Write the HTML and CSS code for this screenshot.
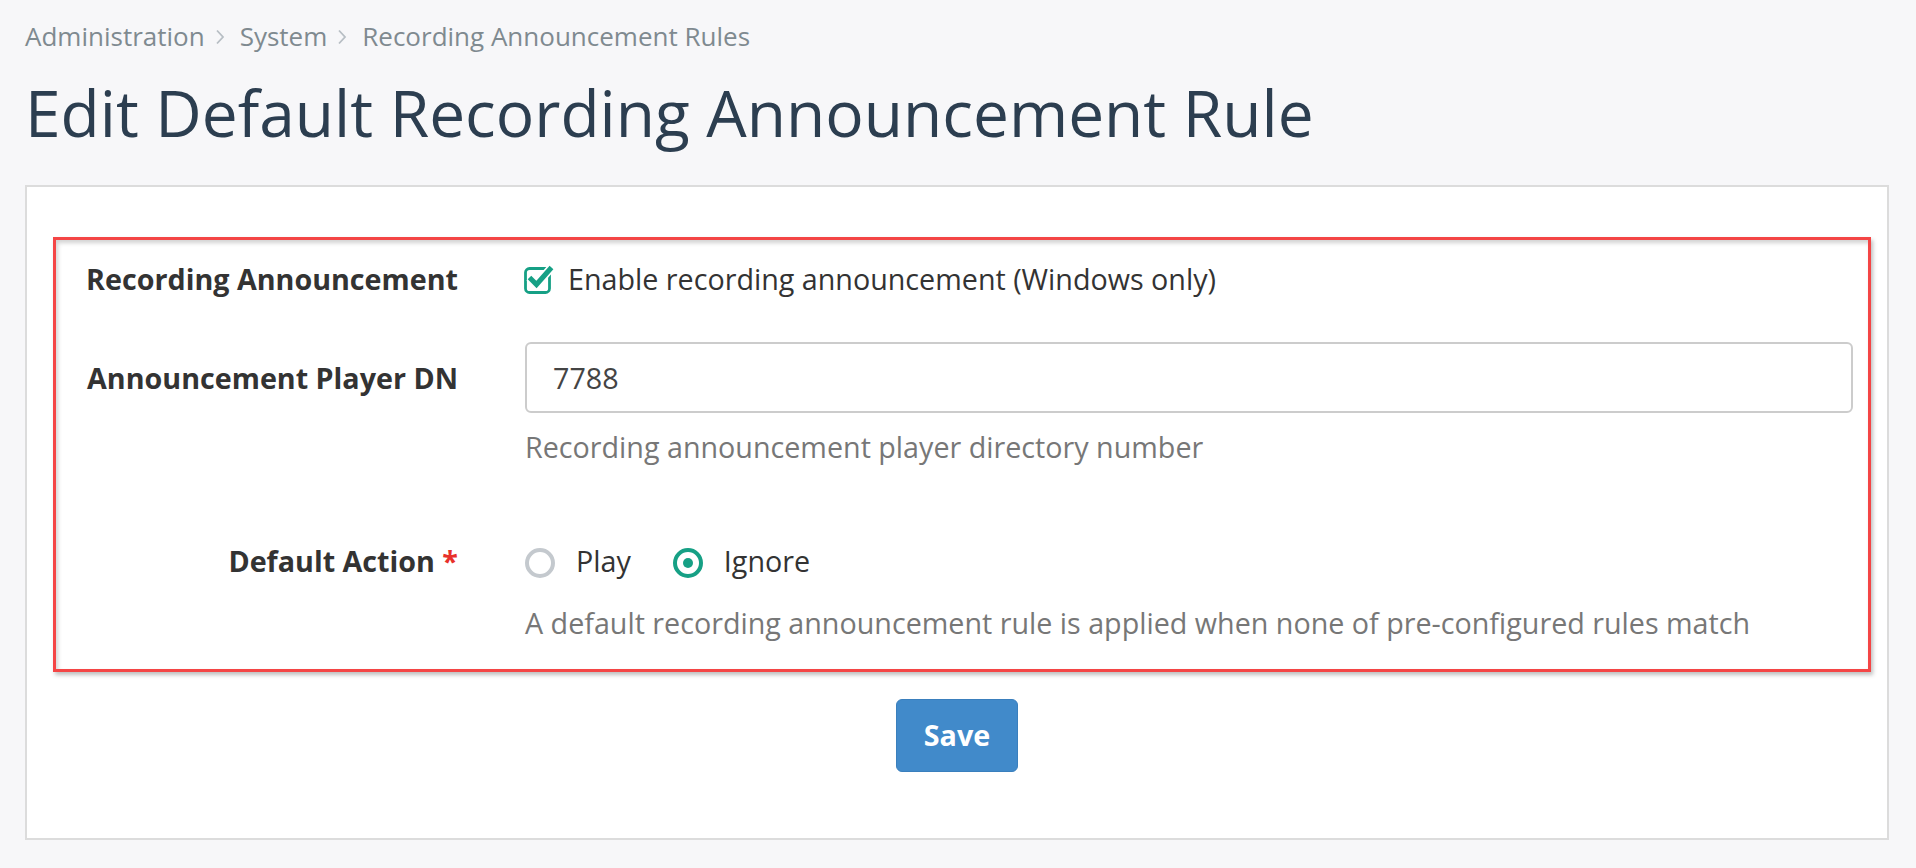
FILE: index.html
```html
<!DOCTYPE html>
<html lang="en">
<head>
    <meta charset="UTF-8">
    <meta name="viewport" content="width=device-width, initial-scale=1">
    <title>Edit Default Recording Announcement Rule</title>
    <link rel="stylesheet" href="styles.css">
</head>
<body>
    <div class="page">
        <div class="breadcrumb">
            <span>Administration</span>
            <svg class="sep" width="10" height="16" viewBox="0 0 10 16"><polyline points="2,1.5 8,8 2,14.5" fill="none" stroke="#b7bec4" stroke-width="1.8"/></svg>
            <span>System</span>
            <svg class="sep" width="10" height="16" viewBox="0 0 10 16"><polyline points="2,1.5 8,8 2,14.5" fill="none" stroke="#b7bec4" stroke-width="1.8"/></svg>
            <span>Recording Announcement Rules</span>
        </div>
        <h1 class="title">Edit Default Recording Announcement Rule</h1>

        <div class="card">
            <form class="rule-form">
                <div class="row row-first">
                    <div class="label">Recording Announcement</div>
                    <div class="control">
                        <label class="check">
                            <svg width="30" height="30" viewBox="0 0 30 30">
                                <rect x="1.5" y="4.5" width="24" height="24" rx="4" fill="none" stroke="#16a085" stroke-width="2.8"/>
                                <polyline points="5.5,13.5 12.5,20.5 27.5,3.5" fill="none" stroke="#ffffff" stroke-width="8.5"/>
                                <polyline points="5.5,13.5 12.5,20.5 27.5,3.5" fill="none" stroke="#16a085" stroke-width="5"/>
                            </svg>
                            <span>Enable recording announcement (Windows only)</span>
                        </label>
                    </div>
                </div>

                <div class="row row-second">
                    <div class="label label-input">Announcement Player DN</div>
                    <div class="control">
                        <input class="text-input" type="text" value="7788">
                        <div class="help help-input">Recording announcement player directory number</div>
                    </div>
                </div>

                <div class="row">
                    <div class="label">Default Action <span class="required">*</span></div>
                    <div class="control">
                        <div class="radios">
                            <label class="radio"><span class="dot"></span><span>Play</span></label>
                            <label class="radio"><span class="dot dot-on"></span><span>Ignore</span></label>
                        </div>
                        <div class="help help-radio">A default recording announcement rule is applied when none of pre-configured rules match</div>
                    </div>
                </div>
            </form>

            <div class="actions">
                <button type="button">Save</button>
            </div>
        </div>
    </div>
</body>
</html>
```

FILE: styles.css
```css
body {
    margin: 0;
    background: #f7f7f9;
    font-family: 'Open Sans', sans-serif;
    color: #333;
}
.page {
    padding: 18px 27px 0 25px;
}
.breadcrumb {
    display: flex;
    align-items: center;
    font-size: 26px;
    line-height: 36px;
    color: #7f8a90;
}
.breadcrumb .sep {
    margin: 2px 15px 0 10px;
}
.title {
    margin: 22px 0 35px 0;
    font-size: 64px;
    line-height: 74px;
    font-weight: 500;
    color: #2c3e50;
}
.card {
    background: white;
    border: 2px solid #dcdcdc;
    padding: 50px 0 66px 0;
}
.rule-form {
    margin: 0 16px 0 26px;
    padding: 19px 15px 26px 0;
    border: 3px solid #f44545;
    box-shadow: 2px 3px 4px rgba(0, 0, 0, 0.25), inset 2px 3px 4px rgba(0, 0, 0, 0.18);
    font-size: 28.7px;
    line-height: 40px;
}
.row {
    display: grid;
    grid-template-columns: 402px 1fr;
    column-gap: 67px;
}
.row-first {
    margin-bottom: 43px;
}
.row-second {
    margin-bottom: 74px;
}
.label {
    text-align: right;
    font-weight: 700;
    color: #333;
}
.label-input {
    padding-top: 16px;
}
.required {
    color: #e8302a;
}
.check {
    display: flex;
    align-items: center;
    gap: 14px;
}
.check svg {
    margin-left: -1px;
}
.text-input {
    display: block;
    width: 100%;
    box-sizing: border-box;
    padding: 14px 26px 13px 26px;
    border: 2px solid #cccccc;
    border-radius: 6px;
    font-family: 'Open Sans', sans-serif;
    font-size: 28.7px;
    line-height: 40px;
    color: #444;
    background: white;
}
.help {
    color: #777;
}
.help-input {
    margin-top: 14px;
}
.help-radio {
    margin-top: 22px;
}
.radios {
    display: flex;
    align-items: center;
    gap: 42px;
}
.radio {
    display: flex;
    align-items: center;
    gap: 21px;
}
.dot {
    display: block;
    width: 30px;
    height: 30px;
    box-sizing: border-box;
    border: 4px solid #c4c9ce;
    border-radius: 50%;
    margin-top: 3px;
    position: relative;
}
.dot-on {
    border-color: #16a085;
}
.dot-on::after {
    content: '';
    position: absolute;
    left: 6px;
    top: 6px;
    width: 10px;
    height: 10px;
    border-radius: 50%;
    background: #16a085;
}
.actions {
    margin-top: 27px;
    text-align: center;
}
button {
    padding: 15px 27px 16px 27px;
    background-color: #418aca;
    color: white;
    border: 1px solid #3a7fbd;
    border-radius: 6px;
    font-family: 'Open Sans', sans-serif;
    font-size: 28.7px;
    line-height: 40px;
    font-weight: 700;
    cursor: pointer;
}
```
